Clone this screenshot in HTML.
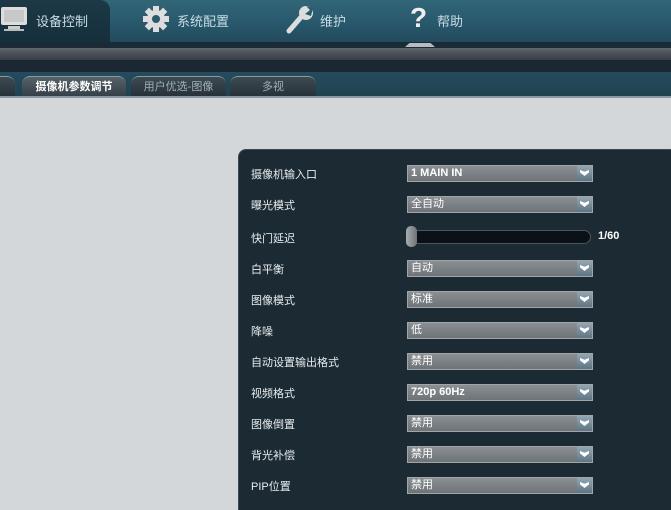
<!DOCTYPE html>
<html><head><meta charset="utf-8"><style>
*{margin:0;padding:0;box-sizing:border-box}
html,body{width:671px;height:510px;overflow:hidden}
body{background:#d3d7da;font-family:"Liberation Sans","Noto Sans CJK SC",sans-serif;position:relative}
.top{position:absolute;left:0;top:0;width:671px;height:43px;background:linear-gradient(#316678,#28566a 60%,#224a5c)}
.act{position:absolute;left:0;top:0;width:110px;height:43px;background:linear-gradient(#1d3846,#15303c);border-top-right-radius:10px}
.nav{position:absolute;top:11px;color:#c8dce4;font-size:13px}
.b1{position:absolute;top:42px;left:0;width:671px;height:6px;background:#1a2b35}
.b2{position:absolute;top:48px;left:0;width:671px;height:12px;background:linear-gradient(#606870,#474e56 50%,#383e46)}
.b3{position:absolute;top:60px;left:0;width:671px;height:12px;background:#1b2733}
.b4{position:absolute;top:72px;left:0;width:671px;height:25px;background:linear-gradient(#244c5e,#20424f)}
.ln{position:absolute;top:96px;left:0;width:671px;height:2px;background:#8a98a2}
.tab{position:absolute;top:76px;height:21px;border-radius:8px 8px 0 0;background:linear-gradient(#3d4a52,#263038);color:#9fb0b8;font-size:11px;text-align:center;line-height:20px;border-top:1px solid #8a9aa3}
.panel{position:absolute;left:238px;top:149px;width:440px;height:370px;background:#1b2a33;border-radius:8px;border:1px solid #3b4a52}
.lab{position:absolute;left:12px;color:#e8eef0;font-size:11px}
.sel{position:absolute;left:168px;width:186px;height:17px;background:linear-gradient(#8a8f93,#6e7377);border:1px solid #a0a5a8;color:#fff;font-size:11px;line-height:15px;padding-left:3px}
.sel b{position:absolute;right:0;top:0;width:15px;height:15px;background:linear-gradient(#94a5b2,#5f7583)}
.sel b::after{content:"";position:absolute;left:3px;top:4px;width:9px;height:6px;background:#fff;clip-path:polygon(0 0,50% 30%,100% 0,100% 40%,50% 100%,0 40%)}
</style></head><body>
<div class="top"></div>
<div class="act"></div>
<svg style="position:absolute;left:0;top:6px" width="28" height="26"><rect x="1" y="1" width="26" height="18" rx="2" fill="#ddd"/><rect x="4" y="4" width="20" height="12" fill="#c8c8c8"/><rect x="8" y="20" width="12" height="3" fill="#ccc"/><rect x="4" y="23" width="20" height="2" fill="#bbb"/></svg>
<div class="nav" style="left:36px">设备控制</div>
<svg style="position:absolute;left:142px;top:5px" width="28" height="28" viewBox="0 0 28 28"><g fill="#ddd"><circle cx="14" cy="14" r="9"/><rect x="11" y="1" width="6" height="26"/><rect x="1" y="11" width="26" height="6"/><rect x="11" y="1" width="6" height="26" transform="rotate(45 14 14)"/><rect x="11" y="1" width="6" height="26" transform="rotate(-45 14 14)"/></g><circle cx="14" cy="14" r="4" fill="#2a5a6c"/></svg>
<div class="nav" style="left:177px">系统配置</div>
<svg style="position:absolute;left:285px;top:4px" width="30" height="30" viewBox="0 0 30 30"><path d="M4 27 L17 12" stroke="#ddd" stroke-width="5" stroke-linecap="round"/><circle cx="21" cy="9" r="7" fill="#ddd"/><path d="M21 2 L25 6 L20 10 L26 12 L28 4Z" fill="#2a5a6c"/></svg>
<div class="nav" style="left:320px">维护</div>
<div style="position:absolute;left:410px;top:2px;color:#eee;font-size:28px;font-weight:bold">?</div>
<div class="nav" style="left:437px">帮助</div>
<div class="b1"></div><div class="b2"></div><div class="b3"></div><div class="b4"></div>
<div style="position:absolute;left:405px;top:43px;width:30px;height:4px;background:#b8bcc0;clip-path:polygon(15% 0,85% 0,100% 100%,0 100%)"></div>
<div class="tab" style="left:-10px;width:25px"></div>
<div class="tab" style="left:22px;width:104px;background:linear-gradient(#56626a,#333d45);color:#fff;font-weight:bold">摄像机参数调节</div>
<div class="tab" style="left:131px;width:95px">用户优选-图像</div>
<div class="tab" style="left:230px;width:86px">多视</div>
<div class="ln"></div>
<div class="panel">
<div class="lab" style="top:16px">摄像机输入口</div><div class="sel" style="top:15px;font-weight:bold">1 MAIN IN<b></b></div>
<div class="lab" style="top:47px">曝光模式</div><div class="sel" style="top:46px">全自动<b></b></div>
<div class="lab" style="top:80px">快门延迟</div>
<div style="position:absolute;left:170px;top:80px;width:182px;height:14px;background:#0b1217;border:1px solid #4a555c;border-radius:7px"></div>
<div style="position:absolute;left:167px;top:76px;width:11px;height:21px;background:linear-gradient(90deg,#a8adb0,#6c7276);border-radius:5px"></div>
<div style="position:absolute;left:359px;top:80px;color:#fff;font-size:11px;font-weight:bold">1/60</div>
<div class="lab" style="top:111px">白平衡</div><div class="sel" style="top:110px">自动<b></b></div>
<div class="lab" style="top:142px">图像模式</div><div class="sel" style="top:141px">标准<b></b></div>
<div class="lab" style="top:173px">降噪</div><div class="sel" style="top:172px">低<b></b></div>
<div class="lab" style="top:204px">自动设置输出格式</div><div class="sel" style="top:203px">禁用<b></b></div>
<div class="lab" style="top:235px">视频格式</div><div class="sel" style="top:234px;font-weight:bold">720p 60Hz<b></b></div>
<div class="lab" style="top:266px">图像倒置</div><div class="sel" style="top:265px">禁用<b></b></div>
<div class="lab" style="top:297px">背光补偿</div><div class="sel" style="top:296px">禁用<b></b></div>
<div class="lab" style="top:328px">PIP位置</div><div class="sel" style="top:327px">禁用<b></b></div>
</div>
</body></html>
